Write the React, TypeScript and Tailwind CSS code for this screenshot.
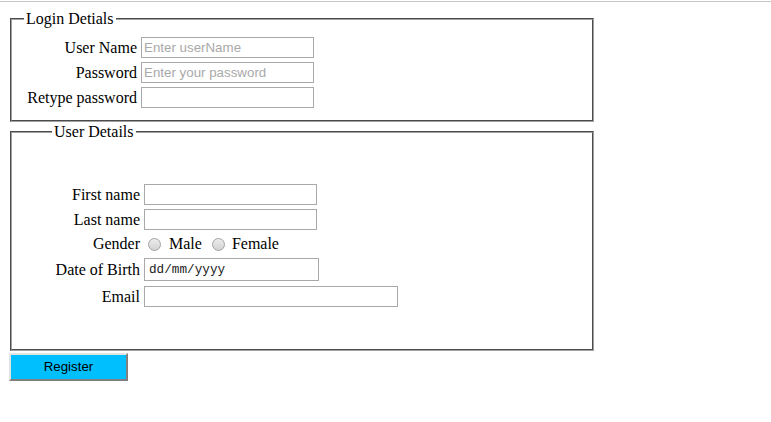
import React from "react";

function Field({
  label,
  labelWidth,
  children,
  className = "",
}: {
  label: string;
  labelWidth: string;
  children: React.ReactNode;
  className?: string;
}) {
  return (
    <div className={`flex items-center ${className}`}>
      <span className={`${labelWidth} text-right leading-[18px]`}>{label}</span>
      <div className="ml-[4px] flex items-center">{children}</div>
    </div>
  );
}

function Radio() {
  return (
    <span className="inline-block w-[13px] h-[13px] rounded-full border border-[#a3a3a3] bg-linear-to-b from-[#ececec] to-[#d2d2d2]" />
  );
}

const inputCls =
  "h-[21px] border border-[#a9a9a9] px-[2px] font-['Liberation_Sans',Arial,sans-serif] text-[13.33px] text-black placeholder:text-[#a9a9a9] outline-none bg-white";

export default function App() {
  return (
    <div className="min-h-screen bg-white font-['Liberation_Serif','Times_New_Roman',serif] text-[16px] text-black">
      {/* thin rule at the very top */}
      <div className="mt-px h-px bg-[#c6c6c6]" />

      <div className="px-2 pt-[8px]">
        {/* Login details */}
        <fieldset className="mx-0.5 w-[584px] border-2 [border-style:groove] border-[#a0a0a0] px-3 pt-[9px] pb-[12px]">
          <legend className="px-0.5 leading-[18px]">Login Detials</legend>
          <div className="flex flex-col gap-1">
            <Field label="User Name" labelWidth="w-[113px]">
              <input className={`${inputCls} w-[173px]`} placeholder="Enter userName" />
            </Field>
            <Field label="Password" labelWidth="w-[113px]">
              <input
                type="password"
                className={`${inputCls} w-[173px]`}
                placeholder="Enter your password"
              />
            </Field>
            <Field label="Retype password" labelWidth="w-[113px]">
              <input type="password" className={`${inputCls} w-[173px]`} />
            </Field>
          </div>
        </fieldset>

        {/* User details */}
        <fieldset className="mx-0.5 mt-[1px] w-[584px] border-2 [border-style:groove] border-[#a0a0a0] px-3 pt-[43px] pb-[42px]">
          <legend className="ml-[28px] px-0.5 leading-[18px]">User Details</legend>
          <div className="flex flex-col">
            <Field label="First name" labelWidth="w-[116px]">
              <input className={`${inputCls} w-[173px]`} />
            </Field>
            <Field label="Last name" labelWidth="w-[116px]" className="mt-[4px]">
              <input className={`${inputCls} w-[173px]`} />
            </Field>
            <Field label="Gender" labelWidth="w-[116px]" className="mt-[3px] h-[22px]">
              <span className="ml-[4px] flex items-center">
                <Radio />
              </span>
              <span className="ml-[8px] leading-[18px]">Male</span>
              <span className="ml-[10px] flex items-center">
                <Radio />
              </span>
              <span className="ml-[7px] leading-[18px]">Female</span>
            </Field>
            <Field label="Date of Birth" labelWidth="w-[116px]" className="mt-[3px]">
              <input
                readOnly
                value="dd/mm/yyyy"
                className="h-[23px] w-[175px] border border-[#a9a9a9] pl-[4px] font-['Liberation_Mono','Courier_New',monospace] text-[12.7px] text-[#222] outline-none bg-white"
              />
            </Field>
            <Field label="Email" labelWidth="w-[116px]" className="mt-[5px]">
              <input type="email" className={`${inputCls} w-[254px]`} />
            </Field>
          </div>
        </fieldset>

        <button className="mt-[2px] ml-px flex h-[28px] w-[119px] items-center justify-center border-2 border-t-[#e3e3e3] border-l-[#e3e3e3] border-r-[#808080] border-b-[#808080] bg-[#00bfff] font-['Liberation_Sans',Arial,sans-serif] text-[13.33px] text-black">
          Register
        </button>
      </div>
    </div>
  );
}
